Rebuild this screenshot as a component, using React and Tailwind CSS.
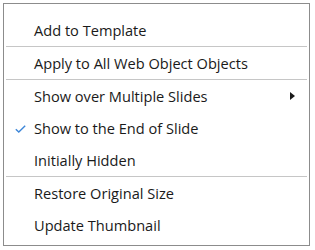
import React from "react";

const Row = ({ children, checked, sub }) => (
  <div className="flex h-[32px] items-center pr-[14px]">
    <div className="flex w-[30px] shrink-0 items-center pl-[11px]">
      {checked && (
        <svg width="11" height="8" viewBox="0 0 11 8" className="mt-[1px]">
          <path d="M0.8 4.2 L3.8 7 L10.2 0.8" fill="none" stroke="#3d86d8" strokeWidth="1.4" />
        </svg>
      )}
    </div>
    <span className="flex-1 text-[14.6px] leading-none text-[#1a1a1a]">{children}</span>
    {sub && (
      <svg width="5" height="8" viewBox="0 0 5 8">
        <path d="M0 0 L5 4 L0 8 Z" fill="#1a1a1a" />
      </svg>
    )}
  </div>
);

const Sep = () => <div className="mx-[2px] h-px bg-[#c6c6c6]" />;

export default function App() {
  return (
    <div className="h-[250px] w-[315px] bg-white p-[3px]" style={{ fontFamily: '"Segoe UI", "Open Sans", "Noto Sans", sans-serif' }}>
      <div className="flex h-[243px] w-[307px] flex-col border border-[#8c8c8c] bg-white pt-[10px]">
        <Row>Add to Template</Row>
        <Sep />
        <Row>Apply to All Web Object Objects</Row>
        <Sep />
        <Row sub>Show over Multiple Slides</Row>
        <Row checked>Show to the End of Slide</Row>
        <Row>Initially Hidden</Row>
        <Sep />
        <Row>Restore Original Size</Row>
        <Row>Update Thumbnail</Row>
      </div>
    </div>
  );
}
